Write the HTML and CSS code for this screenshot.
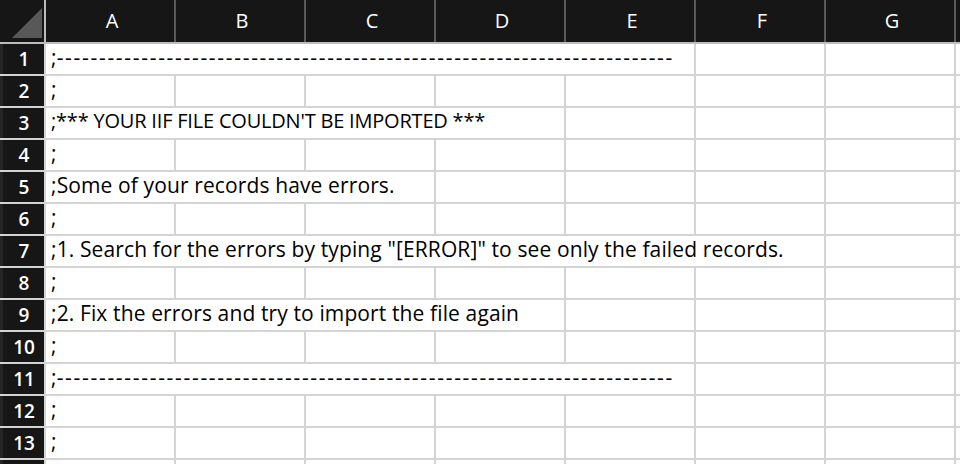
FILE: index.html
```html
<!DOCTYPE html>
<html>
<head>
<meta charset="utf-8">
<link rel="stylesheet" href="styles.css">
</head>
<body>
<div class="sheet">
  <div class="hdr">
    <div class="corner"><svg width="44" height="42" viewBox="0 0 44 42"><polygon points="42,8 42,38 12,38" fill="#585858"/></svg></div>
    <div class="col">A</div><div class="col">B</div><div class="col">C</div><div class="col">D</div><div class="col">E</div><div class="col">F</div><div class="col">G</div><div class="col"></div>
  </div>
  <div class="row"><div class="rn">1</div><div class="c s5">;<span class="dash">-------------------------------------------------------------------------</span></div><div class="c"></div><div class="c"></div><div class="c"></div></div>
  <div class="row"><div class="rn">2</div><div class="c">;</div><div class="c"></div><div class="c"></div><div class="c"></div><div class="c"></div><div class="c"></div><div class="c"></div><div class="c"></div></div>
  <div class="row"><div class="rn">3</div><div class="c s4 caps">;*** YOUR IIF FILE COULDN'T BE IMPORTED ***</div><div class="c"></div><div class="c"></div><div class="c"></div><div class="c"></div></div>
  <div class="row"><div class="rn">4</div><div class="c">;</div><div class="c"></div><div class="c"></div><div class="c"></div><div class="c"></div><div class="c"></div><div class="c"></div><div class="c"></div></div>
  <div class="row"><div class="rn">5</div><div class="c s3">;Some of your records have errors.</div><div class="c"></div><div class="c"></div><div class="c"></div><div class="c"></div><div class="c"></div></div>
  <div class="row"><div class="rn">6</div><div class="c">;</div><div class="c"></div><div class="c"></div><div class="c"></div><div class="c"></div><div class="c"></div><div class="c"></div><div class="c"></div></div>
  <div class="row"><div class="rn">7</div><div class="c s6">;1. Search for the errors by typing "[ERROR]" to see only the failed records.</div><div class="c"></div><div class="c"></div></div>
  <div class="row"><div class="rn">8</div><div class="c">;</div><div class="c"></div><div class="c"></div><div class="c"></div><div class="c"></div><div class="c"></div><div class="c"></div><div class="c"></div></div>
  <div class="row"><div class="rn">9</div><div class="c s4">;2. Fix the errors and try to import the file again</div><div class="c"></div><div class="c"></div><div class="c"></div><div class="c"></div></div>
  <div class="row"><div class="rn">10</div><div class="c">;</div><div class="c"></div><div class="c"></div><div class="c"></div><div class="c"></div><div class="c"></div><div class="c"></div><div class="c"></div></div>
  <div class="row"><div class="rn">11</div><div class="c s5">;<span class="dash">-------------------------------------------------------------------------</span></div><div class="c"></div><div class="c"></div><div class="c"></div></div>
  <div class="row"><div class="rn">12</div><div class="c">;</div><div class="c"></div><div class="c"></div><div class="c"></div><div class="c"></div><div class="c"></div><div class="c"></div><div class="c"></div></div>
  <div class="row"><div class="rn">13</div><div class="c">;</div><div class="c"></div><div class="c"></div><div class="c"></div><div class="c"></div><div class="c"></div><div class="c"></div><div class="c"></div></div>
  <div class="row"><div class="rn"></div><div class="c"></div><div class="c"></div><div class="c"></div><div class="c"></div><div class="c"></div><div class="c"></div><div class="c"></div><div class="c"></div></div>
</div>
</body>
</html>
```
FILE: styles.css
```css
html, body {
  margin: 0;
  padding: 0;
  width: 960px;
  height: 464px;
  overflow: hidden;
  background: #d4d4d4;
}
.sheet {
  width: 960px;
  height: 464px;
  overflow: hidden;
  font-family: "Open Sans", sans-serif;
  font-size: 21px;
}
.hdr {
  display: grid;
  grid-template-columns: 44px repeat(7, 128px) 2px;
  column-gap: 2px;
  height: 42px;
  background: #5a5a5a;
  border-bottom: 2px solid #bdbdbd;
}
.corner {
  background: #161616;
  box-shadow: 2px 0 0 #bdbdbd;
  height: 42px;
}
.corner svg { display: block; }
.col {
  background: #161616;
  color: #fff;
  font-size: 20px;
  text-align: center;
  line-height: 42px;
  padding-left: 4px;
  overflow: hidden;
}
.row {
  display: grid;
  grid-template-columns: 44px repeat(7, 128px) 2px;
  column-gap: 2px;
  height: 30px;
  margin-bottom: 2px;
}
.rn {
  background: #161616;
  box-shadow: inset 3px 0 0 #262626;
  color: #fff;
  font-size: 19px;
  text-align: center;
  line-height: 30px;
  padding-left: 4px;
  font-weight: 600;
}
.c {
  background: #fff;
  color: #000;
  height: 26px;
  line-height: 26px;
  padding: 0 0 4px 5px;
  letter-spacing: 0.12px;
  white-space: nowrap;
  overflow: hidden;
}
.caps { font-size: 20px; letter-spacing: -0.2px; }
.s3 { grid-column: span 3; }
.s4 { grid-column: span 4; }
.s5 { grid-column: span 5; }
.s6 { grid-column: span 6; }
.dash { letter-spacing: 1.7px; }
```
